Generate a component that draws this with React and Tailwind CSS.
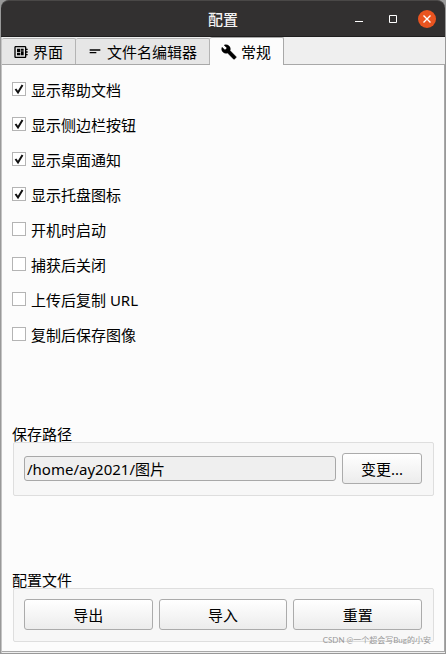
import React, { useState } from 'react'

const tabs = [
  { id: 'interface', label: '界面', Icon: BoardIcon },
  { id: 'filename', label: '文件名编辑器', Icon: ShortTextIcon },
  { id: 'general', label: '常规', Icon: WrenchIcon },
]

const options = [
  { id: 'help', label: '显示帮助文档', on: true },
  { id: 'sidebar', label: '显示侧边栏按钮', on: true },
  { id: 'notify', label: '显示桌面通知', on: true },
  { id: 'tray', label: '显示托盘图标', on: true },
  { id: 'startup', label: '开机时启动', on: false },
  { id: 'close', label: '捕获后关闭', on: false },
  { id: 'url', label: '上传后复制 URL', on: false },
  { id: 'save', label: '复制后保存图像', on: false },
]

function BoardIcon() {
  return (
    <svg viewBox="0 0 24 24" className="w-4 h-4 shrink-0" fill="currentColor" aria-hidden="true">
      <path d="M22 9V7h-2V5c0-1.100-.9-2-2-2H4c-1.100 0-2 .9-2 2v14c0 1.100.9 2 2 2h14c1.100 0 2-.9 2-2v-2h2v-2h-2v-2h2v-2h-2V9h2zm-4 10H4V5h14v14zM6 13h5v4H6v-4zm6-6h4v3h-4V7zM6 7h5v5H6V7zm6 4h4v6h-4v-6z" />
    </svg>
  )
}

function ShortTextIcon() {
  return (
    <svg viewBox="0 0 24 24" className="w-4 h-4 shrink-0" fill="currentColor" aria-hidden="true">
      <path d="M4 8h16v2H4V8zm0 4h10v2H4v-2z" />
    </svg>
  )
}

function WrenchIcon() {
  return (
    <svg viewBox="0 0 24 24" className="w-4 h-4 shrink-0" fill="currentColor" aria-hidden="true">
      <path stroke="currentColor" strokeWidth=".6" d="M22.700 19l-9.100-9.100c.9-2.300.4-5-1.500-6.900-2-2-5-2.400-7.400-1.300L9 6 6 9 1.600 4.700C.4 7.100.9 10.100 2.900 12.100c1.900 1.900 4.600 2.400 6.900 1.500l9.100 9.100c.4.4 1 .4 1.400 0l2.300-2.300c.5-.4.5-1.100.1-1.400z" />
    </svg>
  )
}

const TitleBar = () => (
  <header className="relative flex h-[37px] items-center justify-center rounded-t-lg border-t border-b border-t-[#4a4847] border-b-[#1f1e1e] bg-[#323030] text-[#f2f2f2]">
    <h1 className="text-[15px] leading-5 font-medium">配置</h1>
    <div className="absolute inset-y-0 right-[9px] flex items-center gap-4">
      <button aria-label="最小化" className="flex h-[18px] w-[18px] items-center justify-center">
        <svg viewBox="0 0 18 18" className="w-[18px] h-[18px]"><path d="M5 11.500h8" stroke="#fff" /></svg>
      </button>
      <button aria-label="最大化" className="flex h-[18px] w-[18px] items-center justify-center">
        <svg viewBox="0 0 18 18" className="w-[18px] h-[18px]"><path d="M5.500 5.500h7v7h-7z" fill="none" stroke="#fff" /></svg>
      </button>
      <button aria-label="关闭" className="flex h-[18px] w-[18px] items-center justify-center rounded-full bg-[#e95420]">
        <svg viewBox="0 0 18 18" className="w-[18px] h-[18px]"><path d="M5.500 5.500l7 7m0-7l-7 7" stroke="#fff" strokeWidth="1.400" /></svg>
      </button>
    </div>
  </header>
)

const Option = ({ id, label, checked, onChange }) => (
  <div className="flex h-5 items-start gap-[5px]">
    <span className="relative mt-[3px] flex h-[14px] w-[14px]">
      <input
        id={id}
        type="checkbox"
        checked={checked}
        onChange={onChange}
        className="h-[14px] w-[14px] appearance-none border border-[#b4b4b4] bg-white"
      />
      {checked && (
        <svg viewBox="0 0 14 14" className="pointer-events-none absolute inset-0 h-[14px] w-[14px]" fill="none" stroke="#111" strokeWidth="2">
          <path d="M3.500 7l2.500 3.500L10.500 3" />
        </svg>
      )}
    </span>
    <label htmlFor={id} className="leading-[22px]">{label}</label>
  </div>
)

const Group = ({ title, children }) => (
  <section>
    <h2 className="leading-4">{title}</h2>
    <div className="ml-px flex h-[54px] items-start gap-1.5 rounded-xs border border-[#dedede] bg-[#f7f7f7] pt-2.5 pr-[11px] pl-2.5">
      {children}
    </div>
  </section>
)

const Button = ({ className, children }) => (
  <button className={`h-[31px] rounded-[3px] border border-[#ababab] bg-linear-to-b from-white to-[#ececec] leading-5 ${className}`}>
    {children}
  </button>
)

const App = () => {
  const [active, setActive] = useState('general')
  const [checked, setChecked] = useState(() => options.filter((o) => o.on).map((o) => o.id))
  const [path] = useState('/home/ay2021/图片')

  const toggle = (id) => {
    setChecked((prev) => (prev.includes(id) ? prev.filter((c) => c !== id) : [...prev, id]))
  }

  return (
    <div className="relative flex min-h-dvh flex-col bg-[#999] px-px pb-px font-['Noto_Sans','Noto_Sans_CJK_SC',sans-serif] text-[15px] text-black">
      <TitleBar />
      <div className="flex flex-1 flex-col border-l border-[#c4c4c4] bg-[#efefef] pb-px">
        <nav className="flex h-7 items-end border-b border-[#a8a8a8]" role="tablist">
          {tabs.map(({ id, label, Icon }) => (
            <button
              key={id}
              role="tab"
              aria-selected={active === id}
              onClick={() => setActive(id)}
              className={`flex items-center gap-1 rounded-t-xs border-t border-r pl-[11px] pr-3 leading-5 ${
                active === id
                  ? 'relative -mb-px h-7 border-[#a8a8a8] bg-[#fcfcfc]'
                  : 'h-[26px] border-[#b4b4b4] bg-[#e6e6e6]'
              }`}
            >
              <Icon />
              {label}
            </button>
          ))}
        </nav>

        <main className="flex flex-1 flex-col border-b border-r border-[#a8a8a8] bg-[#fcfcfc] px-2.5 pt-3.5 pb-[9px]">
          <div className="flex flex-col gap-[15px]">
            {options.map((o) => (
              <Option key={o.id} id={o.id} label={o.label} checked={checked.includes(o.id)} onChange={() => toggle(o.id)} />
            ))}
          </div>

          <div className="mt-auto flex flex-col gap-[76px]">
            <Group title="保存路径">
              <input
                readOnly
                aria-label="保存路径"
                value={path}
                className="mt-[3px] h-[25px] min-w-0 flex-1 rounded-[3px] border border-[#a8a8a8] bg-[#efefef] px-0.5 leading-5"
              />
              <Button className="w-20">变更...</Button>
            </Group>
            <Group title="配置文件">
              <Button className="flex-1">导出</Button>
              <Button className="flex-1">导入</Button>
              <Button className="flex-1">重置</Button>
            </Group>
          </div>
        </main>
      </div>
      <p className="pointer-events-none absolute right-[15px] bottom-2 font-['Lato','Noto_Sans_CJK_SC',sans-serif] text-[8px] leading-3 text-[#999]">CSDN @一个超会写Bug的小安</p>
    </div>
  )
}

export default App
